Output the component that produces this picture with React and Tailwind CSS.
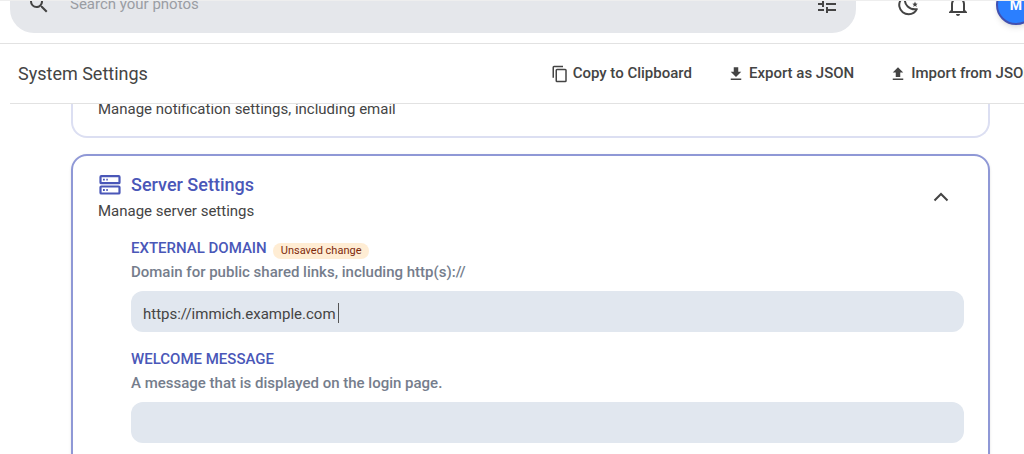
const icons = {
  magnify:
    "M9.5,3A6.5,6.5 0 0,1 16,9.5C16,11.11 15.41,12.59 14.44,13.73L14.71,14H15.5L20.5,19L19,20.5L14,15.5V14.71L13.73,14.44C12.59,15.41 11.11,16 9.5,16A6.5,6.5 0 0,1 3,9.5A6.5,6.5 0 0,1 9.5,3M9.5,5C7,5 5,7 5,9.5C5,12 7,14 9.5,14C12,14 14,12 14,9.5C14,7 12,5 9.5,5Z",
  tune: "M3,17V19H9V17H3M3,5V7H13V5H3M13,21V19H21V17H13V15H11V21H13M7,9V11H3V13H7V15H9V9H7M21,13V11H11V13H21M15,9H17V7H21V5H17V3H15V9Z",
  bell: "M10 21H14C14 22.1 13.1 23 12 23S10 22.1 10 21M21 19V20H3V19L5 17V11C5 7.9 7 5.2 10 4.3V4C10 2.9 10.9 2 12 2S14 2.9 14 4V4.3C17 5.2 19 7.9 19 11V17L21 19M17 11C17 8.2 14.8 6 12 6S7 8.2 7 11V18H17V11Z",
  copy: "M19,21H8V7H19M19,5H8A2,2 0 0,0 6,7V21A2,2 0 0,0 8,23H19A2,2 0 0,0 21,21V7A2,2 0 0,0 19,5M16,1H4A2,2 0 0,0 2,3V17H4V3H16V1Z",
  download: "M5,20H19V18H5M19,9H15V3H9V9H5L12,16L19,9Z",
  upload: "M9,16V10H5L12,3L19,10H15V16H9M5,20V18H19V20H5Z",
};

function Icon({ path, className }) {
  return (
    <svg viewBox="0 0 24 24" fill="currentColor" aria-hidden="true" className={`shrink-0 ${className}`}>
      <path d={path} />
    </svg>
  );
}

function MoonIcon() {
  return (
    <svg viewBox="0 0 24 24" fill="none" aria-hidden="true" className="size-6">
      <path
        d="M9.2 3.6C4.9 5 2.6 9.4 3.4 13.6C4.3 18.3 8.3 21.2 12.7 21.2C16.3 21.2 19.4 19.2 20.8 16.2C14 17.2 7.2 12.2 9.2 3.6Z"
        stroke="currentColor"
        strokeWidth="2"
        strokeLinejoin="round"
      />
      <path d="M19 8.6L19.8 10.5L21.7 10.7L20.2 12L20.7 13.9L19 12.8L17.3 13.9L17.8 12L16.3 10.7L18.2 10.5Z" fill="currentColor" />
    </svg>
  );
}

function ServerIcon() {
  return (
    <svg viewBox="0 0 24 24" fill="none" aria-hidden="true" className="size-6 shrink-0">
      <rect x="2.5" y="3.2" width="19" height="7" rx="0.8" stroke="currentColor" strokeWidth="2.2" />
      <rect x="2.5" y="13.5" width="19" height="7" rx="0.8" stroke="currentColor" strokeWidth="2.2" />
      <path d="M5 5.8H6.8V7.6H5ZM8.3 5.8H9.8V7.6H8.3ZM5 16.1H6.8V17.9H5ZM8.3 16.1H9.8V17.9H8.3Z" fill="currentColor" />
    </svg>
  );
}

function ActionButton({ icon, children }) {
  return (
    <button type="button" className="flex shrink-0 items-center gap-1 px-4 text-[15px] font-medium whitespace-nowrap">
      <Icon path={icon} className="size-[18px]" />
      {children}
    </button>
  );
}

function SettingField({ id, label, description, defaultValue, changed }) {
  return (
    <div>
      <div className="flex h-6 items-center gap-[6px]">
        <label htmlFor={id} className="text-[15px] font-medium text-[#4a57b8] uppercase">
          {label}
        </label>
        {changed && (
          <span className="mt-[6px] rounded-full bg-[#ffedd4] px-2 text-[11px] leading-4 text-[#7e2a0c]">Unsaved change</span>
        )}
      </div>
      <p id={`${id}-description`} className="text-[15px] leading-6 font-medium text-[#757d8c]">
        {description}
      </p>
      <div className="relative mt-[7px]">
        <input
          id={id}
          type="text"
          defaultValue={defaultValue}
          aria-describedby={`${id}-description`}
          className="h-[41px] w-full rounded-xl bg-[#e1e7ef] px-3 pt-1 text-[15px] outline-none"
        />
        {changed && <span className="absolute top-3 left-[207px] h-5 w-px bg-[#555555]" />}
      </div>
    </div>
  );
}

export default function App() {
  return (
    <div className="flex h-screen flex-col overflow-hidden bg-white font-[Roboto,sans-serif] text-[#444444]">
      <header className="flex h-11 shrink-0 items-end gap-8 overflow-hidden border-t border-b border-t-[#eeeeee] border-b-[#e2e2e2] pb-[10px] pl-[10px]">
        <div className="flex h-14 flex-1 items-center rounded-3xl bg-[#e5e7eb] pr-[17px] pb-[2px] pl-[17px]">
          <button type="button" aria-label="Search">
            <Icon path={icons.magnify} className="size-6" />
          </button>
          <input
            type="text"
            aria-label="Search your photos"
            placeholder="Search your photos"
            className="ml-[19px] min-w-0 flex-1 bg-transparent text-[15px] outline-none placeholder:text-[#9a9da3]"
          />
          <button type="button" aria-label="Show search options">
            <Icon path={icons.tune} className="size-6" />
          </button>
        </div>
        <div className="-mr-3 flex h-14 shrink-0 items-center">
          <div className="flex items-center gap-[26px] pl-2">
            <button type="button" aria-label="Toggle theme">
              <MoonIcon />
            </button>
            <button type="button" aria-label="Notifications">
              <Icon path={icons.bell} className="size-6" />
            </button>
            <button
              type="button"
              className="flex size-10 items-center justify-center rounded-full border-2 border-[#4250af] bg-[#2b7fff] text-sm font-bold text-white shadow-md"
            >
              M
            </button>
          </div>
        </div>
      </header>

      <main className="flex min-h-0 flex-1 flex-col">
        <div className="ml-[10px] flex h-[60px] shrink-0 items-center justify-between overflow-hidden border-b border-[#e2e2e2] pl-2">
          <h1 className="text-lg">System Settings</h1>
          <div className="-mr-[26px] flex shrink-0 gap-[3px]">
            <ActionButton icon={icons.copy}>Copy to Clipboard</ActionButton>
            <ActionButton icon={icons.download}>Export as JSON</ActionButton>
            <ActionButton icon={icons.upload}>Import from JSON</ActionButton>
          </div>
        </div>

        <div className="flex min-h-0 flex-1 flex-col gap-4 overflow-hidden pr-[34px] pl-[71px]">
          <section className="flex h-[34px] shrink-0 flex-col justify-end rounded-b-2xl border-2 border-t-0 border-[#dcdff2] px-[25px] pb-[15px]">
            <p className="text-[15px] leading-6">Manage notification settings, including email</p>
          </section>

          <section className="shrink-0 rounded-2xl border-2 border-[#8f98d6] pt-[14px] pr-6 pb-8 pl-[25px] shadow-sm">
            <div className="flex items-center justify-between">
              <div>
                <div className="flex h-[29px] items-center gap-[9px] text-[#4a57b8]">
                  <ServerIcon />
                  <h2 className="text-lg font-medium">Server Settings</h2>
                </div>
                <p className="text-[15px] leading-6">Manage server settings</p>
              </div>
              <button type="button" aria-label="Collapse server settings" className="mr-[7px] p-2">
                <svg viewBox="0 0 16 16" fill="none" stroke="currentColor" strokeWidth="2" aria-hidden="true" className="size-4">
                  <path d="M1.5 11.5L8 5L14.5 11.5" />
                </svg>
              </button>
            </div>

            <form className="mt-[13px] flex flex-col gap-[15px] pl-[33px]">
              <SettingField
                id="external-domain"
                label="External domain"
                description="Domain for public shared links, including http(s)://"
                defaultValue="https://immich.example.com"
                changed
              />
              <SettingField
                id="welcome-message"
                label="Welcome message"
                description="A message that is displayed on the login page."
              />
            </form>
          </section>
        </div>
      </main>
    </div>
  );
}
